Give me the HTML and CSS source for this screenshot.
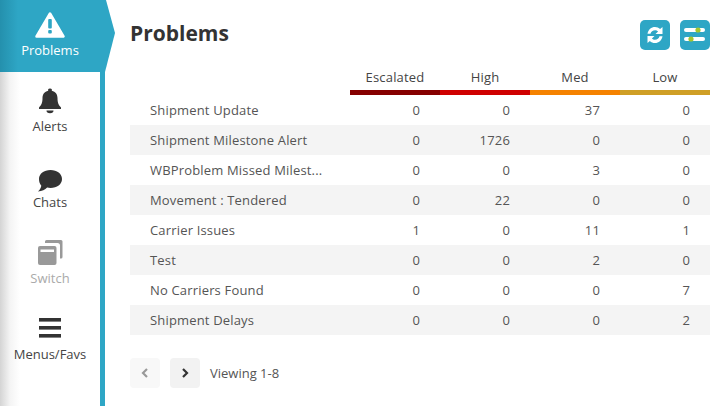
FILE: index.html
```html
<!DOCTYPE html>
<html lang="en">
<head>
  <meta charset="UTF-8" />
  <title>Problems</title>
  <link rel="stylesheet" href="styles.css">
</head>
<body>
  <nav class="sidebar">
    <a class="nav-item active">
      <svg class="nav-icon" width="30" height="26" viewBox="0 0 30 26"><path d="M15 1.500 L28.500 24.500 H1.500 Z" fill="#fff" stroke="#fff" stroke-width="2.500" stroke-linejoin="round"/><rect x="13.200" y="7" width="3.600" height="9.500" rx="1" fill="#2ea6c5"/><rect x="13.200" y="18" width="3.600" height="3.600" rx="1" fill="#2ea6c5"/></svg>
      <span>Problems</span>
    </a>
    <a class="nav-item">
      <svg class="nav-icon" width="24" height="26" viewBox="0 0 24 26"><path d="M12 0.500a1.800 1.800 0 0 1 1.800 2.200c3.700.8 5.700 3.700 5.700 7.300 0 5 1.200 7 3.500 9.500v1.500H1v-1.500c2.300-2.500 3.500-4.500 3.500-9.500 0-3.600 2-6.500 5.700-7.300A1.800 1.800 0 0 1 12 .5Z" fill="#333"/><path d="M8.500 22.500h7a3.500 2.800 0 0 1-7 0Z" fill="#333"/></svg>
      <span>Alerts</span>
    </a>
    <a class="nav-item chats">
      <svg class="nav-icon" width="26" height="24" viewBox="0 0 26 24"><path d="M13.500 1C20 1 25 4.800 25 10s-5 9-11.500 9c-1.200 0-2.300-.1-3.400-.4C8.200 20.500 5 22.500 1 22.500c1.800-1.500 3-3.500 3.300-5.700C2.800 15 2 12.700 2 10 2 4.800 7 1 13.500 1Z" fill="#333"/></svg>
      <span>Chats</span>
    </a>
    <a class="nav-item disabled">
      <svg class="nav-icon" width="26" height="26" viewBox="0 0 26 26"><path d="M8 1.500A1.500 1.500 0 0 1 9.500 0H24a1.500 1.500 0 0 1 1.500 1.500V17a1.500 1.500 0 0 1-1.500 1.500h-1V5.500A2.500 2.500 0 0 0 20.500 3H8Z" fill="#999"/><rect x="1" y="6" width="18.500" height="19" rx="2" fill="#999"/><rect x="3.500" y="9.500" width="13.500" height="2.500" fill="#fff"/></svg>
      <span>Switch</span>
    </a>
    <a class="nav-item">
      <svg class="nav-icon" width="22" height="26" viewBox="0 0 22 22"><rect y="0" width="22" height="3.600" fill="#333"/><rect y="8" width="22" height="3.600" fill="#333"/><rect y="16" width="22" height="3.600" fill="#333"/></svg>
      <span>Menus/Favs</span>
    </a>
  </nav>

  <main class="content">
    <header class="top-bar">
      <h1>Problems</h1>
      <div class="tools">
        <button class="tool-btn">
          <svg width="20" height="20" viewBox="0 0 20 20" fill="#fff"><path d="M2.500 8.800C3.200 4.700 6.300 2 10 2c2 0 3.800.8 5.100 2.100L17.500 2v7h-7l2.600-2.500C12.300 5.600 11.200 5.200 10 5.200c-2.200 0-4 1.400-4.500 3.600Z"/><path d="M17.500 11.200C16.800 15.300 13.700 18 10 18c-2 0-3.800-.8-5.100-2.100L2.500 18v-7h7l-2.600 2.500c.8.900 1.900 1.300 3.100 1.300 2.200 0 4-1.400 4.500-3.600Z"/></svg>
        </button>
        <button class="tool-btn">
          <svg width="24" height="20" viewBox="0 0 24 20"><rect x="1" y="3" width="21" height="4" rx="2" fill="#fff"/><rect x="1" y="12" width="21" height="4" rx="2" fill="#fff"/><circle cx="15" cy="5" r="2.600" fill="#a4c52c"/><circle cx="8" cy="14" r="2.600" fill="#a4c52c"/></svg>
        </button>
      </div>
    </header>

    <table class="problems">
      <thead>
        <tr>
          <th class="name"></th>
          <th class="esc">Escalated</th>
          <th class="high">High</th>
          <th class="med">Med</th>
          <th class="low">Low</th>
        </tr>
      </thead>
      <tbody>
        <tr><td class="name">Shipment Update</td><td>0</td><td>0</td><td>37</td><td>0</td></tr>
        <tr><td class="name">Shipment Milestone Alert</td><td>0</td><td>1726</td><td>0</td><td>0</td></tr>
        <tr><td class="name">WBProblem Missed Milest...</td><td>0</td><td>0</td><td>3</td><td>0</td></tr>
        <tr><td class="name">Movement : Tendered</td><td>0</td><td>22</td><td>0</td><td>0</td></tr>
        <tr><td class="name">Carrier Issues</td><td>1</td><td>0</td><td>11</td><td>1</td></tr>
        <tr><td class="name">Test</td><td>0</td><td>0</td><td>2</td><td>0</td></tr>
        <tr><td class="name">No Carriers Found</td><td>0</td><td>0</td><td>0</td><td>7</td></tr>
        <tr><td class="name">Shipment Delays</td><td>0</td><td>0</td><td>0</td><td>2</td></tr>
      </tbody>
    </table>

    <div class="pager">
      <button class="page-btn off">
        <svg width="10" height="12" viewBox="0 0 10 12"><path d="M7 2 3 6l4 4" fill="none" stroke="#999" stroke-width="2.200"/></svg>
      </button>
      <button class="page-btn">
        <svg width="10" height="12" viewBox="0 0 10 12"><path d="M3 2l4 4-4 4" fill="none" stroke="#333" stroke-width="2.200"/></svg>
      </button>
      <span class="viewing">Viewing 1-8</span>
    </div>
  </main>
</body>
</html>
```

FILE: styles.css
```css
html, body {
  height: 100%;
}
body {
  margin: 0;
  display: flex;
  overflow: hidden;
  font-family: 'Open Sans', sans-serif;
  font-size: 13px;
  color: #444;
  background: #fff;
}

/* Sidebar */
.sidebar {
  box-sizing: border-box;
  flex: 0 0 105px;
  width: 105px;
  height: 406px;
  border-right: 5px solid #2ea6c5;
  background: linear-gradient(to right, #d4d4d4 0, #f4f4f4 10px, #fff 20px);
}
.nav-item {
  display: flex;
  flex-direction: column;
  align-items: center;
  box-sizing: border-box;
  height: 76px;
  width: 100px;
  padding-top: 16px;
  color: #444;
}
.nav-icon {
  display: block;
  height: 26px;
  margin-bottom: 3px;
}
.nav-item span {
  line-height: 18px;
}
.nav-item.active {
  width: 115px;
  height: 72px;
  padding: 12px 15px 0 0;
  color: #fff;
  background: linear-gradient(to right, #2490ad 0, #2ea6c5 18px);
  clip-path: polygon(0 0, 106px 0, 115px 33px, 105px 72px, 0 72px);
}
.nav-item.disabled {
  color: #aaa;
}
.nav-item.chats {
  padding-top: 21px;
}
.nav-item.chats .nav-icon {
  height: 24px;
  margin-bottom: 0;
}

/* Main area */
.content {
  flex: 1;
  padding: 0 16px 0 25px;
}
.top-bar {
  display: flex;
  justify-content: space-between;
  align-items: flex-start;
  box-sizing: border-box;
  height: 65px;
  padding-top: 20px;
}
.top-bar h1 {
  margin: 0;
  font-size: 21px;
  line-height: 26px;
  font-weight: 700;
  color: #333;
}
.tools {
  display: flex;
  gap: 10px;
}
.tool-btn {
  display: flex;
  align-items: center;
  justify-content: center;
  width: 30px;
  height: 30px;
  padding: 0;
  border: 0;
  border-radius: 5px;
  background: #2ea6c5;
}

/* Table */
.problems {
  width: 580px;
  border-collapse: separate;
  border-spacing: 0;
  table-layout: fixed;
  letter-spacing: 0.17px;
}
.problems th {
  height: 22px;
  padding: 1px 0 2px;
  font-weight: 400;
  text-align: center;
  color: #444;
  border-bottom: 5px solid transparent;
  width: 90px;
}
.problems th.name {
  width: 220px;
  border-bottom: 0;
}
.problems th.esc { border-bottom-color: #860000; }
.problems th.high { border-bottom-color: #cf0000; }
.problems th.med { border-bottom-color: #f58200; }
.problems th.low { border-bottom-color: #cf9f26; }
.problems td {
  height: 30px;
  padding: 0 20px 0 0;
  text-align: right;
  color: #555;
}
.problems td.name {
  padding: 0 0 0 20px;
  text-align: left;
}
.problems tbody tr:nth-child(even) {
  background: #f4f4f4;
}

/* Pager */
.pager {
  display: flex;
  align-items: center;
  gap: 10px;
  margin-top: 23px;
}
.page-btn {
  display: flex;
  align-items: center;
  justify-content: center;
  width: 30px;
  height: 30px;
  padding: 0;
  border: 0;
  border-radius: 4px;
  background: #f2f2f2;
}
.page-btn.off {
  background: #f8f8f8;
}
.viewing {
  color: #555;
}
```
